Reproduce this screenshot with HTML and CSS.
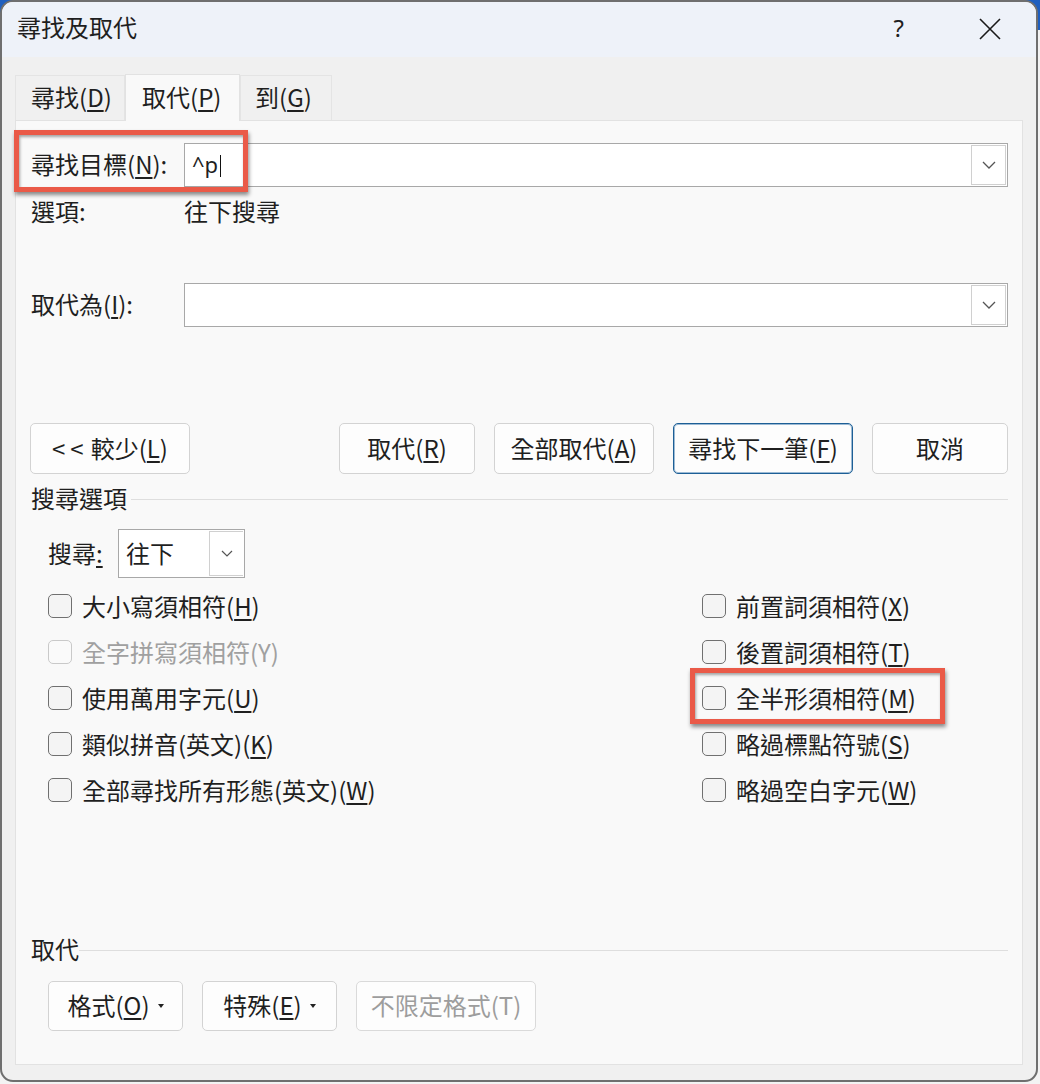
FILE: index.html
```html
<!DOCTYPE html>
<html lang="zh-Hant">
<head>
    <meta charset="UTF-8">
    <meta name="viewport" content="width=device-width, initial-scale=1.0">
    <title>尋找及取代</title>
    <link rel="stylesheet" href="styles.css">
</head>
<body>
    <div class="window">
        <div class="titlebar">
            <span class="title">尋找及取代</span>
            <span class="help">?</span>
            <svg class="close" width="22" height="22" viewBox="0 0 22 22">
                <path d="M1 1 L21 21 M21 1 L1 21" stroke="#1a1a1a" stroke-width="1.6" fill="none"/>
            </svg>
        </div>

        <div class="client">
            <div class="tabs">
                <div class="tab tab-find">尋找(<u>D</u>)</div>
                <div class="tab tab-replace active">取代(<u>P</u>)</div>
                <div class="tab tab-goto">到(<u>G</u>)</div>
            </div>

            <div class="panel">
                <div class="field-row">
                    <label class="field-label">尋找目標(<u>N</u>):</label>
                    <div class="combo">
                        <span class="combo-text">^p<span class="caret"></span></span>
                        <span class="combo-drop">
                            <svg width="14" height="8" viewBox="0 0 14 8"><path d="M1 1 L7 7 L13 1" stroke="#555" stroke-width="1.3" fill="none"/></svg>
                        </span>
                    </div>
                </div>
                <div class="options-row">
                    <span class="field-label">選項:</span>
                    <span>往下搜尋</span>
                </div>

                <div class="field-row replace-row">
                    <label class="field-label">取代為(<u>I</u>):</label>
                    <div class="combo">
                        <span class="combo-text"></span>
                        <span class="combo-drop">
                            <svg width="14" height="8" viewBox="0 0 14 8"><path d="M1 1 L7 7 L13 1" stroke="#555" stroke-width="1.3" fill="none"/></svg>
                        </span>
                    </div>
                </div>

                <div class="button-row">
                    <button class="btn btn-less"><span class="chevrons">&lt;&lt;</span> 較少(<u>L</u>)</button>
                    <div class="button-group">
                        <button class="btn btn-sm">取代(<u>R</u>)</button>
                        <button class="btn btn-md">全部取代(<u>A</u>)</button>
                        <button class="btn btn-lg default">尋找下一筆(<u>F</u>)</button>
                        <button class="btn btn-sm">取消</button>
                    </div>
                </div>

                <div class="group-title"><span>搜尋選項</span></div>

                <div class="search-row">
                    <span class="search-label">搜尋<u>:</u></span>
                    <div class="select">
                        <span class="select-text">往下</span>
                        <span class="combo-drop">
                            <svg width="12" height="7" viewBox="0 0 12 7"><path d="M1 1 L6 6 L11 1" stroke="#555" stroke-width="1.2" fill="none"/></svg>
                        </span>
                    </div>
                </div>

                <div class="checks">
                    <div class="check"><span class="box"></span>大小寫須相符(<u>H</u>)</div>
                    <div class="check"><span class="box"></span>前置詞須相符(<u>X</u>)</div>
                    <div class="check disabled"><span class="box"></span>全字拼寫須相符(Y)</div>
                    <div class="check"><span class="box"></span>後置詞須相符(<u>T</u>)</div>
                    <div class="check"><span class="box"></span>使用萬用字元(<u>U</u>)</div>
                    <div class="check"><span class="box"></span>全半形須相符(<u>M</u>)</div>
                    <div class="check"><span class="box"></span>類似拼音(英文)(<u>K</u>)</div>
                    <div class="check"><span class="box"></span>略過標點符號(<u>S</u>)</div>
                    <div class="check"><span class="box"></span>全部尋找所有形態(英文)(<u>W</u>)</div>
                    <div class="check"><span class="box"></span>略過空白字元(<u>W</u>)</div>
                </div>

                <div class="group-title replace-group"><span>取代</span></div>

                <div class="format-row">
                    <button class="btn btn-menu">格式(<u>O</u>)<i class="tri"></i></button>
                    <button class="btn btn-menu">特殊(<u>E</u>)<i class="tri"></i></button>
                    <button class="btn btn-lg" disabled>不限定格式(T)</button>
                </div>
            </div>
        </div>

        <!-- callout boxes drawn over the dialog -->
        <div class="callout callout-find"></div>
        <div class="callout callout-width"></div>
    </div>
</body>
</html>
```

FILE: styles.css
```css
* {
    box-sizing: border-box;
}
body {
    margin: 0;
    width: 1040px;
    height: 1084px;
    background: linear-gradient(#1f5fbf 0, #1f5fbf 30px, #f3f3f3 30px);
    font-family: "Noto Sans CJK TC", "Noto Sans", sans-serif;
    font-size: 24px;
    color: #1f1f1f;
    overflow: hidden;
}
u {
    text-decoration-thickness: 1.5px;
    text-underline-offset: 3px;
}
.window {
    position: relative;
    width: 1038px;
    height: 1082px;
    border: 2px solid #6f6f6f;
    border-radius: 13px;
    background: #f0f0f0;
    overflow: hidden;
    display: flex;
    flex-direction: column;
}

/* title bar */
.titlebar {
    height: 55px;
    flex: none;
    display: flex;
    align-items: center;
    padding-left: 15px;
    background: #eef2f9;
}
.title {
    line-height: 30px;
    padding-bottom: 6px;
}
.help {
    margin-left: auto;
    font-family: "Noto Sans", sans-serif;
    font-size: 24px;
    line-height: 30px;
    padding-bottom: 4px;
}
.close {
    margin: -2px 35px 0 75px;
}

/* tab strip + page */
.client {
    flex: 1;
    display: flex;
    flex-direction: column;
    padding: 16px 13px 15px 13px;
}
.tabs {
    display: flex;
    align-items: flex-end;
    height: 47px;
    flex: none;
}
.tab {
    height: 45px;
    line-height: 41px;
    padding-left: 15px;
    border: 1px solid #e4e4e4;
    border-bottom: none;
    background: #f0f0f0;
}
.tab-find {
    width: 110px;
}
.tab-replace {
    width: 115px;
    padding-left: 16px;
}
.tab-goto {
    width: 92px;
    padding-left: 14px;
}
.tab.active {
    height: 47px;
    line-height: 43px;
    background: #f9f9f9;
    border-color: #e2e2e2;
    position: relative;
    top: 1px;
    z-index: 1;
}
.panel {
    flex: 1;
    background: #f9f9f9;
    border: 1px solid #e2e2e2;
    padding: 22px 14px 0 15px;
}

/* text fields */
.field-row {
    display: flex;
    align-items: center;
    height: 44px;
}
.field-label {
    width: 153px;
    flex: none;
    line-height: 26px;
    padding-bottom: 3px;
}
.combo {
    flex: 1;
    height: 44px;
    border: 1px solid #a8a8a8;
    background: #fff;
    display: flex;
    align-items: center;
}
.combo-text {
    flex: 1;
    padding-left: 7px;
    padding-bottom: 2px;
    font-family: "Noto Sans", sans-serif;
    font-size: 22px;
    display: flex;
    align-items: center;
}
.caret {
    width: 1px;
    height: 22px;
    margin: 3px 0 0 2px;
    background: #111;
}
.combo-drop {
    width: 35px;
    height: 40px;
    margin-right: 1px;
    border: 1px solid #d0d0d0;
    display: flex;
    align-items: center;
    justify-content: center;
    background: #fff;
}
.options-row {
    display: flex;
    margin-top: 11px;
    height: 26px;
    line-height: 26px;
}
.options-row span {
    padding-bottom: 3px;
}
.replace-row {
    margin-top: 59px;
}

/* buttons */
.button-row {
    display: flex;
    justify-content: space-between;
    margin-top: 96px;
    margin-left: -1px;
}
.button-group {
    display: flex;
    gap: 19px;
}
.btn {
    height: 51px;
    font: inherit;
    color: #1f1f1f;
    background: #fdfdfd;
    border: 1px solid #d3d3d3;
    border-radius: 5px;
    padding: 0 0 3px 0;
    display: flex;
    align-items: center;
    justify-content: center;
}
.chevrons {
    letter-spacing: 5px;
    margin-right: 2px;
}
.btn-less {
    width: 160px;
}
.btn-sm {
    width: 136px;
}
.btn-md {
    width: 160px;
}
.btn-lg {
    width: 180px;
}
.btn.default {
    border: 1px solid #1d5f96;
    box-shadow: inset 0 0 0 1px #9cbad4;
}
.btn:disabled {
    color: #9d9d9d;
    border-color: #dadada;
}

/* group captions with a rule */
.group-title {
    display: flex;
    align-items: center;
    margin-top: 12px;
    height: 26px;
    line-height: 26px;
}
.group-title span {
    padding-bottom: 3px;
}
.group-title::after {
    content: "";
    flex: 1;
    height: 1px;
    margin-left: 4px;
    margin-top: 1px;
    background: #dedede;
}

/* search direction */
.search-row {
    display: flex;
    align-items: center;
    margin: 17px 0 0 17px;
}
.search-label {
    width: 70px;
    padding-bottom: 3px;
}
.select {
    width: 127px;
    height: 49px;
    border: 1px solid #a8a8a8;
    background: #fff;
    display: flex;
    align-items: center;
}
.select-text {
    flex: 1;
    padding: 0 0 3px 7px;
}
.select .combo-drop {
    height: 45px;
    width: 34px;
    border-right: none;
}

/* checkboxes */
.checks {
    display: grid;
    grid-template-columns: 654px 1fr;
    grid-auto-rows: 46px;
    margin: 5px 0 0 17px;
}
.check {
    display: flex;
    align-items: center;
    padding-bottom: 1px;
}
.box {
    width: 24px;
    height: 24px;
    margin: 0 10px 0 0;
    border: 1.5px solid #707070;
    border-radius: 5px;
    background: #f4f4f4;
}
.check.disabled {
    color: #a0a0a0;
}
.check.disabled .box {
    border-color: #c9c9c9;
    background: #fafafa;
}
.replace-group {
    margin-top: 124px;
}
.replace-group::after {
    margin-left: 0;
}

/* format buttons */
.format-row {
    display: flex;
    gap: 19px;
    margin: 18px 0 0 17px;
}
.btn-menu {
    width: 135px;
    height: 50px;
}
.format-row .btn-lg {
    height: 50px;
}
.tri {
    width: 0;
    height: 0;
    margin: 3px 0 0 8px;
    border-left: 3.5px solid transparent;
    border-right: 3.5px solid transparent;
    border-top: 4px solid #222;
}

/* red callouts */
.callout {
    position: absolute;
    border: 5px solid #ea5a48;
    box-shadow: 1px 3px 4px rgba(0, 0, 0, 0.45), inset 1px 2px 3px rgba(0, 0, 0, 0.35);
}
.callout-find {
    left: 12px;
    top: 128px;
    width: 234px;
    height: 62px;
}
.callout-width {
    left: 688px;
    top: 666px;
    width: 255px;
    height: 56px;
}
```
